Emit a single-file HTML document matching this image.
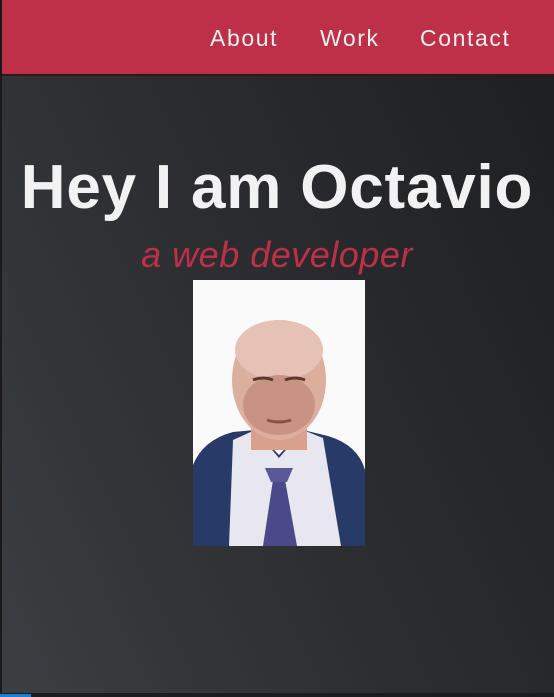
<!DOCTYPE html>
<html><head><meta charset="utf-8"><style>
html,body{margin:0;padding:0;width:554px;height:697px;overflow:hidden;font-family:"Liberation Sans",sans-serif}
body{background:linear-gradient(65deg,#3b3e42 0%,#2c2e31 45%,#1d1e20 100%);position:relative}
.lb{position:absolute;left:0;top:0;width:2px;height:697px;background:#1a1a1a}
header{position:absolute;left:2px;top:0;width:552px;height:74px;background:#be3047;border-bottom:2px solid #2a1a1d}
nav a{position:absolute;top:25px;color:#f4f0f0;font-size:23px;letter-spacing:1.6px;text-decoration:none;line-height:26px}
h1{position:absolute;left:0;width:554px;top:152px;margin:0;text-align:center;color:#f2f2f2;font-size:62px;font-weight:bold;line-height:72px;letter-spacing:0.8px}
.sub{position:absolute;left:0;width:554px;top:234px;text-align:center;color:#be3047;font-size:36px;font-style:italic;font-weight:300;line-height:42px;letter-spacing:0.5px}
.photo{position:absolute;left:193px;top:280px;width:172px;height:266px;overflow:hidden;background:#fbfbfb}
.bot{position:absolute;left:0;top:693px;width:554px;height:4px;background:#1b1c1e}
.blue{position:absolute;left:0;top:694px;width:31px;height:3px;background:#1a7fd9}
</style></head><body>
<div class="lb"></div>
<header><nav>
<a style="left:208px">About</a><a style="left:318px">Work</a><a style="left:418px">Contact</a>
</nav></header>
<h1>Hey I am Octavio</h1>
<div class="sub">a web developer</div>
<div class="photo">
<svg width="172" height="266" viewBox="0 0 172 266">
<rect width="172" height="266" fill="#fafafa"/>
<path d="M0 185 Q10 160 40 152 L62 150 L86 175 L110 150 L135 156 Q165 165 172 190 L172 266 L0 266Z" fill="#283a68"/>
<path d="M40 160 L62 150 L86 178 L110 150 L130 158 L148 266 L36 266Z" fill="#e8e6ee"/>
<path d="M76 190 L96 190 L92 200 L104 266 L70 266 L80 200Z" fill="#4a4a8a"/>
<path d="M72 188 L100 188 L94 202 L78 202Z" fill="#5a5898"/>
<rect x="58" y="135" width="56" height="35" fill="#d9a08e"/>
<ellipse cx="86" cy="100" rx="47" ry="60" fill="#dcae9e"/>
<ellipse cx="86" cy="70" rx="44" ry="30" fill="#e6c2b6"/>
<ellipse cx="86" cy="125" rx="36" ry="30" fill="#c99383"/>
<path d="M60 100 Q70 96 80 100 M92 100 Q102 96 112 100" stroke="#5a3a30" stroke-width="3" fill="none"/>
<path d="M74 140 Q86 144 98 140" stroke="#8a5040" stroke-width="3" fill="none"/>
</svg>
</div>
<div class="bot"></div><div class="blue"></div>
</body></html>
